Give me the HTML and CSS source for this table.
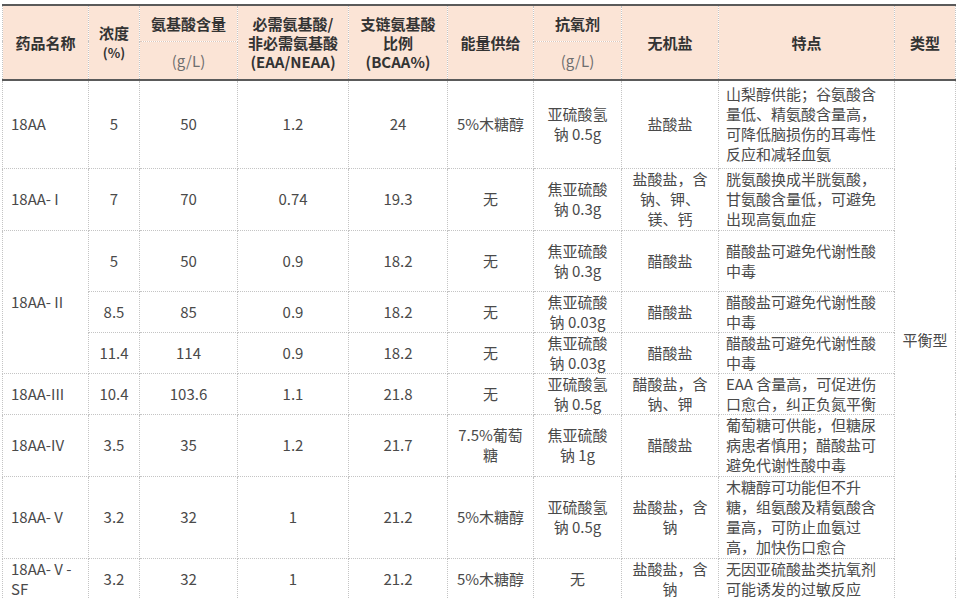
FILE: index.html
```html
<!DOCTYPE html>
<html lang="zh-CN">
<head>
<meta charset="utf-8">
<title>18AA</title>
<link rel="stylesheet" href="styles.css">
</head>
<body>
<table class="aa">
  <colgroup>
    <col class="c1"><col class="c2"><col class="c3"><col class="c4"><col class="c5">
    <col class="c6"><col class="c7"><col class="c8"><col class="c9"><col class="c10">
  </colgroup>
  <thead>
    <tr class="h1">
      <th rowspan="2">药品名称</th>
      <th rowspan="2">浓度<br><span class="pct">(%)</span></th>
      <th class="split">氨基酸含量</th>
      <th rowspan="2">必需氨基酸/<br>非必需氨基酸<br>(EAA/NEAA)</th>
      <th rowspan="2">支链氨基酸<br>比例<br>(BCAA%)</th>
      <th rowspan="2">能量供给</th>
      <th class="split">抗氧剂</th>
      <th rowspan="2">无机盐</th>
      <th rowspan="2">特点</th>
      <th rowspan="2">类型</th>
    </tr>
    <tr class="h2">
      <th class="sub">(g/L)</th>
      <th class="sub">(g/L)</th>
    </tr>
  </thead>
  <tbody>
    <tr class="r88">
      <td class="name">18AA</td><td>5</td><td>50</td><td>1.2</td><td>24</td><td>5%木糖醇</td>
      <td>亚硫酸氢<br>钠 0.5g</td><td>盐酸盐</td>
      <td class="note">山梨醇供能；谷氨酸含<br>量低、精氨酸含量高，<br>可降低脑损伤的耳毒性<br>反应和减轻血氨</td>
      <td rowspan="9" class="type">平衡型</td>
    </tr>
    <tr class="r62">
      <td class="name">18AA- I</td><td>7</td><td>70</td><td>0.74</td><td>19.3</td><td>无</td>
      <td>焦亚硫酸<br>钠 0.3g</td><td>盐酸盐，含<br>钠、钾、<br>镁、钙</td>
      <td class="note">胱氨酸换成半胱氨酸，<br>甘氨酸含量低，可避免<br>出现高氨血症</td>
    </tr>
    <tr class="r61">
      <td class="name" rowspan="3">18AA- II</td><td>5</td><td>50</td><td>0.9</td><td>18.2</td><td>无</td>
      <td>焦亚硫酸<br>钠 0.3g</td><td>醋酸盐</td>
      <td class="note">醋酸盐可避免代谢性酸<br>中毒</td>
    </tr>
    <tr class="r41">
      <td>8.5</td><td>85</td><td>0.9</td><td>18.2</td><td>无</td>
      <td>焦亚硫酸<br>钠 0.03g</td><td>醋酸盐</td>
      <td class="note">醋酸盐可避免代谢性酸<br>中毒</td>
    </tr>
    <tr class="r40">
      <td>11.4</td><td>114</td><td>0.9</td><td>18.2</td><td>无</td>
      <td>焦亚硫酸<br>钠 0.03g</td><td>醋酸盐</td>
      <td class="note">醋酸盐可避免代谢性酸<br>中毒</td>
    </tr>
    <tr class="r41">
      <td class="name">18AA-III</td><td>10.4</td><td>103.6</td><td>1.1</td><td>21.8</td><td>无</td>
      <td>亚硫酸氢<br>钠 0.5g</td><td>醋酸盐，含<br>钠、钾</td>
      <td class="note">EAA 含量高，可促进伤<br>口愈合，纠正负氮平衡</td>
    </tr>
    <tr class="r62">
      <td class="name">18AA-IV</td><td>3.5</td><td>35</td><td>1.2</td><td>21.7</td><td>7.5%葡萄<br>糖</td>
      <td>焦亚硫酸<br>钠 1g</td><td>醋酸盐</td>
      <td class="note">葡萄糖可供能，但糖尿<br>病患者慎用；醋酸盐可<br>避免代谢性酸中毒</td>
    </tr>
    <tr class="r82">
      <td class="name">18AA- V</td><td>3.2</td><td>32</td><td>1</td><td>21.2</td><td>5%木糖醇</td>
      <td>亚硫酸氢<br>钠 0.5g</td><td>盐酸盐，含<br>钠</td>
      <td class="note">木糖醇可功能但不升<br>糖，组氨酸及精氨酸含<br>量高，可防止血氨过<br>高，加快伤口愈合</td>
    </tr>
    <tr class="r40">
      <td class="name">18AA- V -<br>SF</td><td>3.2</td><td>32</td><td>1</td><td>21.2</td><td>5%木糖醇</td>
      <td>无</td><td>盐酸盐，含<br>钠</td>
      <td class="note">无因亚硫酸盐类抗氧剂<br>可能诱发的过敏反应</td>
    </tr>
  </tbody>
</table>
</body>
</html>
```
FILE: styles.css
```css
html, body {
  margin: 0;
  padding: 0;
  background: #ffffff;
}

body {
  font-family: "Noto Sans CJK SC", "Noto Sans", sans-serif;
  color: #4a4a4a;
}

.aa {
  border-collapse: collapse;
  table-layout: fixed;
  width: 953px;
  margin: 4px 0 0 2px;
  font-size: 15px;
  line-height: 20px;
}

.c1 { width: 86px; }
.c2 { width: 51px; }
.c3 { width: 98px; }
.c4 { width: 111px; }
.c5 { width: 99px; }
.c6 { width: 86px; }
.c7 { width: 88px; }
.c8 { width: 97px; }
.c9 { width: 176px; }
.c10 { width: 61px; }

.aa th,
.aa td {
  border: 1px dotted #c4c4c4;
  padding: 0 4px;
  text-align: center;
  vertical-align: middle;
  overflow: hidden;
  white-space: nowrap;
}

.aa thead th {
  background: #fbe4d6;
  color: #333333;
  font-weight: 700;
  line-height: 19px;
}

.aa thead tr.h1 th {
  border-top: 2px solid #5a5a5a;
}

.aa thead tr.h1 th[rowspan],
.aa thead tr.h2 th {
  border-bottom: 2px solid #5a5a5a;
}

.aa thead .split {
  border-bottom: 1px dotted #dcc8bc;
}

.aa thead .sub {
  font-weight: 400;
  color: #6e6e6e;
}

.pct {
  font-size: 13px;
}

.h1 { height: 36px; }
.h2 { height: 39px; }

.r88 { height: 88px; }
.r82 { height: 82px; }
.r62 { height: 62px; }
.r61 { height: 61px; }
.r41 { height: 41px; }
.r40 { height: 40px; }

.aa td.name {
  text-align: left;
  padding-left: 8px;
}

.aa td.note {
  text-align: left;
  padding-left: 7px;
}
```
